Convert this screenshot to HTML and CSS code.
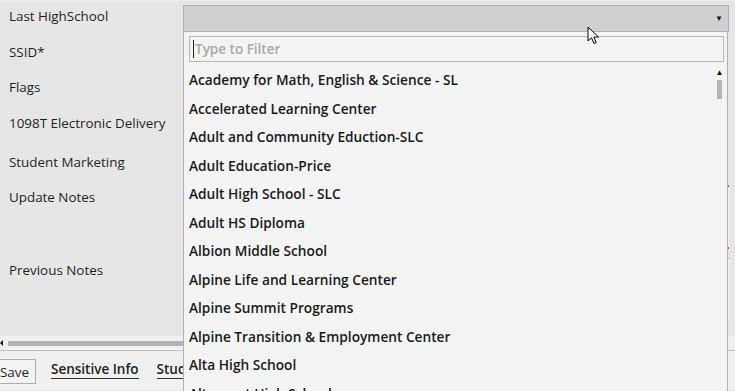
FILE: index.html
```html
<!DOCTYPE html>
<html>
<head>
    <title>Student Detail</title>
    <link rel="stylesheet" href="styles.css">
</head>
<body>
    <div class="screen">
        <!-- Form rows -->
        <div class="form">
            <div class="row r1">
                <div class="label">Last HighSchool</div>
                <div class="field"><div class="combo"><span class="combo-arrow">▼</span></div></div>
            </div>
            <div class="row r2">
                <div class="label">SSID*</div>
                <div class="field"><div class="box"></div></div>
            </div>
            <div class="row r3">
                <div class="label">Flags</div>
                <div class="field"><div class="box"></div></div>
            </div>
            <div class="row r4">
                <div class="label">1098T Electronic Delivery</div>
                <div class="field"><div class="box"></div></div>
            </div>
            <div class="row r5">
                <div class="label">Student Marketing</div>
                <div class="field"><div class="box"></div></div>
            </div>
            <div class="row r6">
                <div class="label">Update Notes</div>
                <div class="field"><div class="notes invalid"></div></div>
            </div>
            <div class="row r7">
                <div class="label">Previous Notes</div>
                <div class="field"><div class="notes"></div></div>
            </div>
            <div class="band"></div>
        </div>

        <!-- Horizontal scrollbar -->
        <div class="hscroll">
            <span class="hscroll-arrow"></span>
            <div class="hscroll-thumb"></div>
        </div>

        <!-- Bottom toolbar -->
        <div class="toolbar">
            <button class="save-btn">Save</button>
            <span class="tab">Sensitive Info</span>
            <span class="tab">Student Info</span>
        </div>

        <!-- Open dropdown -->
        <div class="dropdown">
            <div class="filter">
                <span class="caret"></span>
                <span class="placeholder">Type to Filter</span>
            </div>
            <div class="list">
                <div class="item">Academy for Math, English &amp; Science - SL</div>
                <div class="item">Accelerated Learning Center</div>
                <div class="item">Adult and Community Eduction-SLC</div>
                <div class="item">Adult Education-Price</div>
                <div class="item">Adult High School - SLC</div>
                <div class="item">Adult HS Diploma</div>
                <div class="item">Albion Middle School</div>
                <div class="item">Alpine Life and Learning Center</div>
                <div class="item">Alpine Summit Programs</div>
                <div class="item">Alpine Transition &amp; Employment Center</div>
                <div class="item">Alta High School</div>
                <div class="item">Altamont High School</div>
            </div>
            <div class="vscroll">
                <span class="vscroll-arrow">▲</span>
                <div class="vscroll-thumb"></div>
            </div>
        </div>

        <!-- Mouse pointer -->
        <svg class="cursor" width="14" height="20" viewBox="0 0 14 20">
            <path d="M1 1 L1 15 L4.5 11.8 L7 17.5 L9.2 16.6 L6.8 11 L11.5 11 Z" fill="#fff" stroke="#000" stroke-width="1" stroke-linejoin="miter"/>
        </svg>
    </div>
</body>
</html>
```

FILE: styles.css
```css
body {
    margin: 0;
    background: #e6e6e6;
    font-family: "Open Sans", "Noto Sans", sans-serif;
    color: #1e1e1e;
}

.screen {
    position: relative;
    width: 735px;
    height: 391px;
    overflow: hidden;
    border-top: 1px solid #ededed;
    box-sizing: border-box;
}

.form {
    display: flex;
    flex-direction: column;
}

.row {
    display: flex;
}

.label {
    width: 174px;
    padding-left: 9px;
    padding-top: 8px;
    font-size: 13.4px;
    line-height: 18px;
    white-space: nowrap;
}

.field {
    flex: 1;
    padding-right: 6px;
}

.r1 { height: 34px; }
.r1 .label { padding-top: 6px; }
.r2 { height: 35px; }
.r3 { height: 36px; }
.r4 { height: 37px; }
.r5 { height: 37px; }
.r5 .label { padding-top: 10px; }
.r6 { height: 73px; }
.r7 { height: 68px; }

.combo {
    position: relative;
    margin-top: 4px;
    height: 25px;
    background: #d0d0d0;
    border: 1px solid #b0b0b0;
}

.combo-arrow {
    position: absolute;
    right: 5px;
    top: 6px;
    font-size: 8px;
    color: #111;
}

.box {
    margin-top: 5px;
    height: 24px;
    background: #e6e6e6;
}

.notes {
    margin-top: 5px;
    height: 62px;
    background: #f4f4f4;
    border-top: 1px solid #b4b4b4;
    border-bottom: 1px solid #b4b4b4;
}

.notes.invalid {
    border-top: 2px solid #e8401c;
    border-bottom: 2px solid #e8401c;
    height: 60px;
}

.band {
    height: 15px;
    background: #e6e6e6;
}

.hscroll {
    display: flex;
    align-items: center;
    height: 14px;
    background: #f0f0f0;
    border-bottom: 1px solid #c2c2c2;
}

.hscroll-arrow {
    width: 0;
    height: 0;
    border-top: 3px solid transparent;
    border-bottom: 3px solid transparent;
    border-right: 3px solid #111;
    margin-right: 5px;
}

.hscroll-thumb {
    width: 300px;
    height: 5px;
    background: #b4b4b4;
}

.toolbar {
    display: flex;
    align-items: center;
    height: 39px;
    margin-left: -8px;
    background: #f0f0f0;
}

.save-btn {
    height: 25px;
    margin-top: 2px;
    margin-right: 15px;
    padding: 0 6px 0 7px;
    background: #f4f4f4;
    border: 1px solid #adadad;
    font-family: "Open Sans", "Noto Sans", sans-serif;
    font-size: 13.4px;
    color: #1e1e1e;
}

.tab {
    font-size: 13.5px;
    font-weight: 600;
    line-height: 17px;
    border-bottom: 1px solid #333;
    margin-top: -2px;
    margin-right: 18px;
}

.dropdown {
    position: absolute;
    left: 183px;
    top: 31px;
    width: 545px;
    height: 370px;
    background: #f4f4f4;
    border-left: 1px solid #b0b0b0;
    border-right: 1px solid #b0b0b0;
    box-sizing: border-box;
    padding: 4px 3px 0 5px;
}

.filter {
    display: flex;
    align-items: center;
    height: 26px;
    border: 1px solid #b8b8b8;
    box-sizing: border-box;
    padding-left: 3px;
}

.caret {
    width: 1px;
    height: 18px;
    background: #222;
    margin-right: 1px;
}

.placeholder {
    font-size: 13.5px;
    font-weight: 600;
    color: #a8a8a8;
}

.list {
    padding-top: 4px;
}

.item {
    height: 28.55px;
    line-height: 28.55px;
    font-size: 13.7px;
    font-weight: 600;
    color: #1a1a1a;
    white-space: nowrap;
}

.vscroll {
    position: absolute;
    right: 4px;
    top: 36px;
    width: 7px;
    display: flex;
    flex-direction: column;
    align-items: center;
}

.vscroll-arrow {
    font-size: 8px;
    line-height: 8px;
    color: #111;
}

.vscroll-thumb {
    margin-top: 4px;
    width: 5px;
    height: 19px;
    background: #b4b4b4;
}

.cursor {
    position: absolute;
    left: 587px;
    top: 25px;
}
```
